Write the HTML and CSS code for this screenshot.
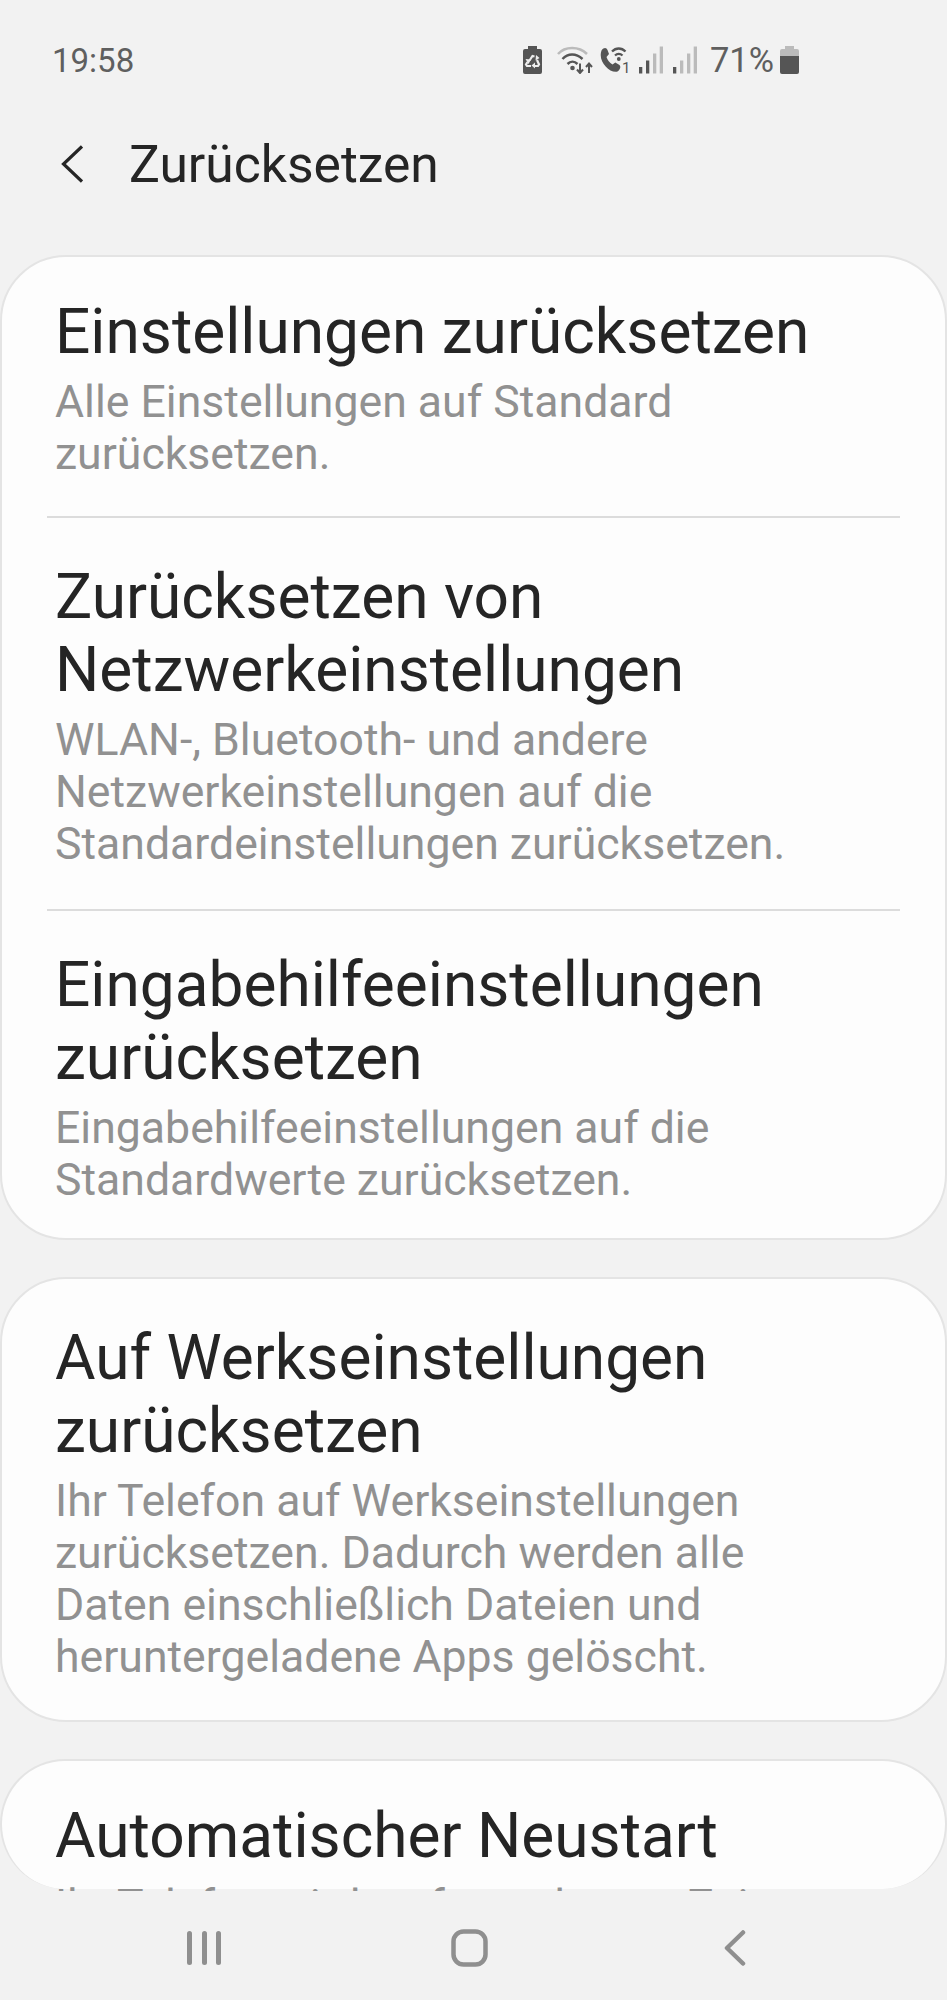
FILE: index.html
```html
<!DOCTYPE html>
<html lang="de">
<head>
    <meta charset="UTF-8">
    <meta name="viewport" content="width=device-width, initial-scale=1.0">
    <title>Zurücksetzen</title>
    <link rel="stylesheet" href="styles.css">
</head>
<body>
    <div class="status-bar">
        <span class="clock">19:58</span>
        <div class="status-icons">
            <svg class="icon-saver" width="19" height="28" viewBox="0 0 19 28">
                <path d="M5 0h9v3h3a2 2 0 0 1 2 2v21a2 2 0 0 1-2 2H2a2 2 0 0 1-2-2V5a2 2 0 0 1 2-2h3z" fill="#555"/>
                <path d="M6.500 14.500l3-4.500 2 .5M14 14l2 4.500-1 1.500h-3.500M8 20H4l-1-1.500 1.500-2.500" fill="none" stroke="#eee" stroke-width="2.200"/>
                <path d="M13 9l-.5 5.500 4-2.500zM12 16.500v6l-3.500-3zM5.500 18l-3-5 5.500.5z" fill="#eee"/>
            </svg>
            <svg class="icon-wifi" width="36" height="28" viewBox="0 0 36 28" fill="none">
                <path d="M1 8C8 0 22 0 30 8" stroke="#bbb" stroke-width="2.500"/>
                <path d="M5.500 13C11 7 19 7 25.500 13" stroke="#555" stroke-width="2.500"/>
                <path d="M10.500 18c3-3 7-3 10 0" stroke="#555" stroke-width="2.500"/>
                <circle cx="15.500" cy="22" r="2.300" fill="#555"/>
                <path d="M23 17.500V27M20 23.500l3 3.500 3-3.500" stroke="#555" stroke-width="2"/>
                <path d="M32 27v-9.500M29 21l3-3.500 3 3.500" stroke="#555" stroke-width="2"/>
            </svg>
            <svg class="icon-call" width="31" height="28" viewBox="0 0 31 28" fill="none">
                <path d="M1.500 4.500C4 1 6.500 1.500 7.500 4l1.500 4-2.500 3c1 3 3 5.500 6 7.500l2.800-2 4.200 2.500c1.500 1.500 1 4.500-2 6.500C9.500 27.500-2.500 15 1.500 4.500z" fill="#555"/>
                <path d="M12 5.500c4-4 9.500-4 13.500 0M15 9.500c2.200-2 5.300-2 7.500 0" stroke="#555" stroke-width="2.300"/>
                <circle cx="18.800" cy="13" r="1.900" fill="#555"/>
                <text x="22" y="27" class="sim-number">1</text>
            </svg>
            <svg class="icon-signal" width="24" height="28" viewBox="0 0 24 28">
                <rect x="0" y="21" width="3.300" height="6.500" fill="#555"/>
                <rect x="7" y="14.500" width="3.300" height="13" fill="#555"/>
                <rect x="14" y="7.500" width="3.300" height="20" fill="#bbb"/>
                <rect x="20.700" y="0.500" width="3.300" height="27" fill="#bbb"/>
            </svg>
            <svg class="icon-signal" width="24" height="28" viewBox="0 0 24 28">
                <rect x="0" y="21" width="3.300" height="6.500" fill="#555"/>
                <rect x="7" y="14.500" width="3.300" height="13" fill="#bbb"/>
                <rect x="14" y="7.500" width="3.300" height="20" fill="#bbb"/>
                <rect x="20.700" y="0.500" width="3.300" height="27" fill="#bbb"/>
            </svg>
            <span class="battery-text">71%</span>
            <svg class="icon-battery" width="19" height="28" viewBox="0 0 19 28">
                <path d="M5 0h9v3h3a2 2 0 0 1 2 2v5H0V5a2 2 0 0 1 2-2h3z" fill="#bbb"/>
                <path d="M0 10h19v16a2 2 0 0 1-2 2H2a2 2 0 0 1-2-2z" fill="#555"/>
            </svg>
        </div>
    </div>

    <div class="app-bar">
        <svg class="back-icon" width="22" height="38" viewBox="0 0 22 38" fill="none">
            <path d="M21 1.500L2.500 19 21 36.500" stroke="#252525" stroke-width="3.200"/>
        </svg>
        <h1 class="page-title">Zurücksetzen</h1>
    </div>

    <main class="list">
        <section class="card">
            <div class="item">
                <h2 class="item-title">Einstellungen zurücksetzen</h2>
                <p class="item-desc">Alle Einstellungen auf Standard zurücksetzen.</p>
            </div>
            <div class="item">
                <h2 class="item-title">Zurücksetzen von Netzwerkeinstellungen</h2>
                <p class="item-desc">WLAN-, Bluetooth- und andere Netzwerkeinstellungen auf die Standardeinstellungen zurücksetzen.</p>
            </div>
            <div class="item">
                <h2 class="item-title">Eingabehilfeeinstellungen zurücksetzen</h2>
                <p class="item-desc">Eingabehilfeeinstellungen auf die Standardwerte zurücksetzen.</p>
            </div>
        </section>
        <section class="card">
            <div class="item item-factory">
                <h2 class="item-title">Auf Werkseinstellungen zurücksetzen</h2>
                <p class="item-desc">Ihr Telefon auf Werkseinstellungen zurücksetzen. Dadurch werden alle Daten einschließlich Dateien und heruntergeladene Apps gelöscht.</p>
            </div>
        </section>
        <section class="card card-cut">
            <div class="item">
                <h2 class="item-title">Automatischer Neustart</h2>
                <p class="item-desc">Ihr Telefon wird zu festgelegten Zeiten neu gestartet.</p>
            </div>
        </section>
    </main>

    <nav class="nav-bar">
        <svg width="35" height="36" viewBox="0 0 35 36" fill="#8f8f8f">
            <rect x="0" y="1" width="5" height="34" rx="2.500"/>
            <rect x="15" y="1" width="5" height="34" rx="2.500"/>
            <rect x="29" y="1" width="5" height="34" rx="2.500"/>
        </svg>
        <svg width="37" height="38" viewBox="0 0 37 38" fill="none">
            <rect x="2.500" y="2.500" width="32" height="33" rx="10" stroke="#8f8f8f" stroke-width="4.500"/>
        </svg>
        <svg width="22" height="36" viewBox="0 0 22 36" fill="none">
            <path d="M19 2.500L3 18l16 15.500" stroke="#8f8f8f" stroke-width="4.500" stroke-linecap="round" stroke-linejoin="round"/>
        </svg>
    </nav>
</body>
</html>
```

FILE: styles.css
```css
* {
    box-sizing: border-box;
}
body {
    margin: 0;
    width: 947px;
    height: 2000px;
    overflow: hidden;
    background: #f2f2f2;
    font-family: Roboto, "Liberation Sans", sans-serif;
    color: #252525;
}
/* Status bar */
.status-bar {
    display: flex;
    align-items: center;
    justify-content: space-between;
    height: 60px;
    margin-top: 30px;
    padding: 0 148px 0 52px;
    color: #5f5f5f;
}
.clock {
    font-size: 33px;
}
.status-icons {
    display: flex;
    align-items: center;
}
.sim-number {
    font-family: Roboto, sans-serif;
    font-size: 15px;
    fill: #555;
}
.icon-wifi {
    margin-left: 15px;
}
.icon-call {
    margin-left: 7px;
}
.icon-signal {
    margin-left: 8px;
}
.icon-signal + .icon-signal {
    margin-left: 10px;
}
.battery-text {
    font-size: 34.5px;
    margin-left: 13px;
}
.icon-battery {
    margin-left: 6px;
}
/* Title row */
.app-bar {
    display: flex;
    align-items: center;
    height: 84px;
    margin-top: 32px;
    padding-left: 61px;
    gap: 46px;
}
.page-title {
    margin: 0;
    font-size: 51.6px;
    font-weight: 400;
}
/* Scrolling list */
.list {
    height: 1685px;
    padding-top: 49px;
    overflow: hidden;
}
.card {
    margin-bottom: 37px;
    background: #fdfdfd;
    border: 2px solid #e4e4e4;
    border-radius: 66px;
    padding: 0 45px;
}
.card-cut {
    height: 130px;
    margin-bottom: 0;
    border-bottom: none;
}
.item {
    padding: 38px 65px 36px 8px;
    border-bottom: 2px solid #dcdcdc;
}
.item + .item {
    padding-top: 42px;
    padding-bottom: 39px;
}
.item + .item + .item {
    padding-top: 37px;
}
.item:last-child {
    padding-bottom: 32px;
    border-bottom: none;
}
.item-factory {
    padding-top: 42px;
}
.item-factory:last-child {
    padding-bottom: 37px;
}
.item-title {
    margin: 0 0 8px;
    font-size: 62.2px;
    line-height: 73px;
    font-weight: 400;
}
.item-desc {
    margin: 0;
    font-size: 44.6px;
    line-height: 52px;
    color: #919191;
}
/* Navigation keys */
.nav-bar {
    display: grid;
    grid-template-columns: repeat(3, 1fr);
    justify-items: center;
    align-items: center;
    height: 109px;
    padding: 5px 80px 0 72px;
}
```
